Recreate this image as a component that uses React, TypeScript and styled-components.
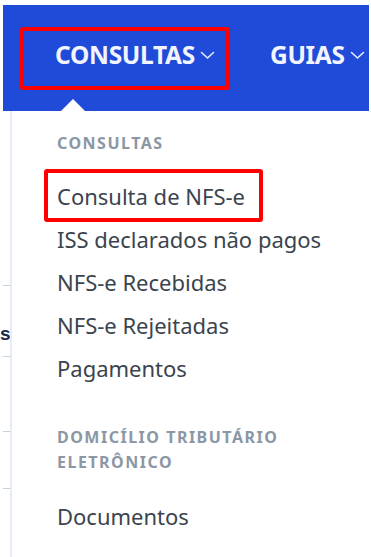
import React from 'react';
import styled, { createGlobalStyle } from 'styled-components';

const GlobalStyle = createGlobalStyle`
  html, body {
    margin: 0;
    padding: 0;
    background: #ffffff;
  }
  body {
    font-family: "Noto Sans", "Open Sans", sans-serif;
  }
`;

const Frame = styled.div`
  width: 371px;
  height: 557px;
  box-sizing: border-box;
  padding: 5px 2px 0 3px;
  overflow: hidden;
  background: #ffffff;
`;

const NavBar = styled.div`
  height: 106px;
  background: #1f4bd8;
  display: flex;
  align-items: center;
  gap: 55px;
  padding: 0 0 6px 52px;
  box-sizing: border-box;
  overflow: hidden;
  white-space: nowrap;
`;

const NavItem = styled.div<{ active?: boolean }>`
  position: relative;
  display: flex;
  align-items: center;
  gap: 5px;
  height: 30px;
  line-height: 30px;
  color: #f2f5ff;
  font-family: "Noto Sans", sans-serif;
  font-weight: 700;
  font-size: 24.5px;
  letter-spacing: -0.3px;
  flex-shrink: 0;

  ${(p) =>
    p.active &&
    `
    &::after {
      content: '';
      position: absolute;
      left: -35px;
      right: -15px;
      top: -13px;
      bottom: -20px;
      border: 4px solid #ff0000;
      border-radius: 3px;
    }
    &::before {
      content: '';
      position: absolute;
      left: 6px;
      bottom: -41px;
      border-left: 12px solid transparent;
      border-right: 12px solid transparent;
      border-bottom: 12px solid #ffffff;
    }
  `}
`;

const Chevron = () => (
  <svg width="15" height="10" viewBox="0 0 15 10" fill="none">
    <path d="M1.5 2.5 L7.5 8 L13.5 2.5" stroke="#e8eeff" strokeWidth="1.6" strokeLinecap="round" strokeLinejoin="round" />
  </svg>
);

const Body = styled.div`
  display: flex;
  height: 446px;
`;

const Backdrop = styled.div`
  width: 7px;
  display: flex;
  flex-direction: column;
  align-items: flex-start;
`;

const Tick = styled.div<{ top: number }>`
  margin-top: ${(p) => p.top}px;
  width: 7px;
  height: 1px;
  background: #c9d0da;
`;

const Peek = styled.div`
  margin-top: 40px;
  margin-left: -3px;
  font-family: "Liberation Sans", sans-serif;
  font-weight: 700;
  font-size: 19px;
  line-height: 16px;
  color: #1b2a4a;
  height: 16px;
`;

const Panel = styled.div`
  flex: 1;
  border-left: 2px solid #e4ecf7;
  padding: 20px 0 0 45px;
  display: flex;
  flex-direction: column;
  align-items: flex-start;
`;

const SectionTitle = styled.div<{ spaced?: boolean }>`
  font-family: "Noto Sans", sans-serif;
  font-weight: 700;
  font-size: 16px;
  line-height: 25px;
  letter-spacing: 1.5px;
  color: #8b97a5;
  text-transform: uppercase;
  margin-top: ${(p) => (p.spaced ? 35 : 0)}px;
  margin-bottom: ${(p) => (p.spaced ? 20 : 19)}px;
`;

const MenuItem = styled.div<{ marked?: boolean }>`
  position: relative;
  font-family: "Noto Sans", sans-serif;
  font-size: 22px;
  line-height: 43px;
  color: #3b444e;

  ${(p) =>
    p.marked &&
    `
    &::after {
      content: '';
      position: absolute;
      left: -13px;
      right: -18px;
      top: -6px;
      bottom: -4px;
      border: 4px solid #ff0000;
      border-radius: 3px;
    }
  `}
`;

export default function App() {
  return (
    <>
      <GlobalStyle />
      <Frame>
        <NavBar>
          <NavItem active>
            CONSULTAS <Chevron />
          </NavItem>
          <NavItem>
            GUIAS <Chevron />
          </NavItem>
        </NavBar>
        <Body>
          <Backdrop>
            <Tick top={174} />
            <Peek>s</Peek>
            <Tick top={14} />
            <Tick top={74} />
            <Tick top={56} />
          </Backdrop>
          <Panel>
            <SectionTitle>Consultas</SectionTitle>
            <MenuItem marked>Consulta de NFS-e</MenuItem>
            <MenuItem>ISS declarados não pagos</MenuItem>
            <MenuItem>NFS-e Recebidas</MenuItem>
            <MenuItem>NFS-e Rejeitadas</MenuItem>
            <MenuItem>Pagamentos</MenuItem>
            <SectionTitle spaced>
              Domicílio Tributário
              <br />
              Eletrônico
            </SectionTitle>
            <MenuItem>Documentos</MenuItem>
          </Panel>
        </Body>
      </Frame>
    </>
  );
}
